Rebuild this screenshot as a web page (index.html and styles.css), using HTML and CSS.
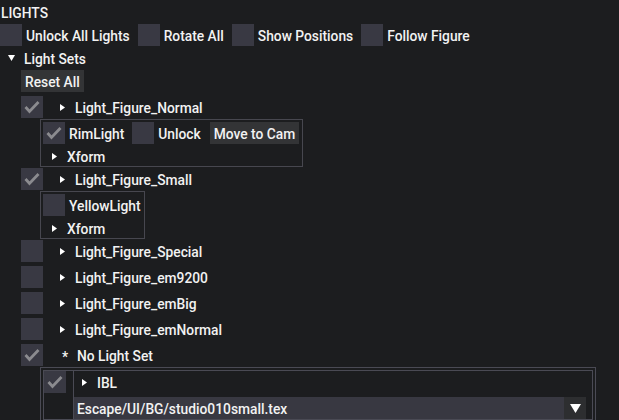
FILE: index.html
```html
<!DOCTYPE html>
<html>
<head>
<meta charset="utf-8">
<link rel="stylesheet" href="styles.css">
</head>
<body>
<div class="panel">
  <div class="title">LIGHTS</div>
  <div class="row">
    <span class="cb"></span><span class="lbl">Unlock All Lights</span>
    <span class="cb"></span><span class="lbl">Rotate All</span>
    <span class="cb"></span><span class="lbl">Show Positions</span>
    <span class="cb"></span><span class="lbl">Follow Figure</span>
  </div>
  <div class="node top"><span class="arr"><svg width="7" height="6" viewBox="0 0 7 6"><path d="M0 0H7L3.5 6Z" fill="#fff"/></svg></span>Light Sets</div>
  <div class="list">
    <div class="btn">Reset All</div>

    <div class="row">
      <span class="cb"><svg class="ck" width="22" height="22" viewBox="0 0 22 22"><path d="M4.5 11 8.5 15.5 17.5 6" fill="none" stroke="#8b8b8f" stroke-width="2.8"/></svg></span>
      <span class="node set"><span class="arr"><svg width="5" height="7" viewBox="0 0 5 7"><path d="M0 0V7L5 3.5Z" fill="#fff"/></svg></span>Light_Figure_Normal</span>
    </div>
    <div class="box">
      <div class="row">
        <span class="cb"><svg class="ck" width="22" height="22" viewBox="0 0 22 22"><path d="M4.5 11 8.5 15.5 17.5 6" fill="none" stroke="#8b8b8f" stroke-width="2.8"/></svg></span><span class="lbl">RimLight</span>
        <span class="cb"></span><span class="lbl">Unlock</span>
        <span class="btn">Move to Cam</span>
      </div>
      <div class="node xf"><span class="arr"><svg width="5" height="7" viewBox="0 0 5 7"><path d="M0 0V7L5 3.5Z" fill="#fff"/></svg></span>Xform</div>
    </div>

    <div class="row">
      <span class="cb"><svg class="ck" width="22" height="22" viewBox="0 0 22 22"><path d="M4.5 11 8.5 15.5 17.5 6" fill="none" stroke="#8b8b8f" stroke-width="2.8"/></svg></span>
      <span class="node set"><span class="arr"><svg width="5" height="7" viewBox="0 0 5 7"><path d="M0 0V7L5 3.5Z" fill="#fff"/></svg></span>Light_Figure_Small</span>
    </div>
    <div class="box">
      <div class="row">
        <span class="cb"></span><span class="lbl">YellowLight</span>
      </div>
      <div class="node xf"><span class="arr"><svg width="5" height="7" viewBox="0 0 5 7"><path d="M0 0V7L5 3.5Z" fill="#fff"/></svg></span>Xform</div>
    </div>

    <div class="row">
      <span class="cb"></span>
      <span class="node set"><span class="arr"><svg width="5" height="7" viewBox="0 0 5 7"><path d="M0 0V7L5 3.5Z" fill="#fff"/></svg></span>Light_Figure_Special</span>
    </div>
    <div class="row">
      <span class="cb"></span>
      <span class="node set"><span class="arr"><svg width="5" height="7" viewBox="0 0 5 7"><path d="M0 0V7L5 3.5Z" fill="#fff"/></svg></span>Light_Figure_em9200</span>
    </div>
    <div class="row">
      <span class="cb"></span>
      <span class="node set"><span class="arr"><svg width="5" height="7" viewBox="0 0 5 7"><path d="M0 0V7L5 3.5Z" fill="#fff"/></svg></span>Light_Figure_emBig</span>
    </div>
    <div class="row">
      <span class="cb"></span>
      <span class="node set"><span class="arr"><svg width="5" height="7" viewBox="0 0 5 7"><path d="M0 0V7L5 3.5Z" fill="#fff"/></svg></span>Light_Figure_emNormal</span>
    </div>
    <div class="row">
      <span class="cb"><svg class="ck" width="22" height="22" viewBox="0 0 22 22"><path d="M4.5 11 8.5 15.5 17.5 6" fill="none" stroke="#8b8b8f" stroke-width="2.8"/></svg></span>
      <span class="node set star"><span class="arr">*</span>No Light Set</span>
    </div>
    <div class="outer">
      <div class="tbl">
        <div class="c1"><span class="cb"><svg class="ck" width="22" height="22" viewBox="0 0 22 22"><path d="M4.5 11 8.5 15.5 17.5 6" fill="none" stroke="#8b8b8f" stroke-width="2.8"/></svg></span></div>
        <div class="c2">
          <div class="node ibl"><span class="arr"><svg width="5" height="7" viewBox="0 0 5 7"><path d="M0 0V7L5 3.5Z" fill="#fff"/></svg></span>IBL</div>
          <div class="combo"><span class="val">Escape/UI/BG/studio010small.tex</span><span class="drop"><svg width="11" height="9" viewBox="0 0 11 9"><path d="M0 0H11L5.5 9Z" fill="#fff"/></svg></span></div>
        </div>
      </div>
    </div>
  </div>
</div>
</body>
</html>
```

FILE: styles.css
```css
html, body {
  margin: 0;
  padding: 0;
  background: #1c1d1f;
}
body {
  font-family: "Roboto", "Liberation Sans", sans-serif;
  font-weight: 500;
  font-size: 13.8px;
  color: #f2f2f2;
  overflow: hidden;
  width: 619px;
  height: 420px;
}
.panel {
  display: flex;
  flex-direction: column;
  gap: 4px;
  padding-top: 4px;
}
.title {
  height: 16px;
  box-sizing: border-box;
  padding: 2px 0 0 1px;
  line-height: 14px;
}
.row {
  display: flex;
  align-items: center;
  height: 22px;
}
.cb {
  width: 22px;
  height: 22px;
  background: #393943;
  flex: none;
  display: block;
}
.ck { display: block; }
.lbl {
  margin-left: 4px;
  margin-right: 8px;
  height: 22px;
  box-sizing: border-box;
  padding-top: 2px;
  line-height: 20px;
  white-space: nowrap;
}
.node {
  display: flex;
  align-items: center;
  height: 16px;
  white-space: nowrap;
}
.node .txt { line-height: 16px; }
.arr {
  display: flex;
  align-items: center;
  width: 15px;
  flex: none;
  align-self: stretch;
}
.arr svg { display: block; }
.node {
  box-sizing: border-box;
  padding-top: 2px;
  line-height: 14px;
}
.node .arr { margin-top: -2px; }
.node.top { margin-left: 8px; }
.node.top .arr { width: 16px; }
.node.set { margin-left: 17px; height: 22px; }
.node.star .arr { width: 17px; padding-left: 2px; box-sizing: border-box; padding-top: 4px; }
.node.xf { margin-left: 9px; }
.list {
  display: flex;
  flex-direction: column;
  gap: 4px;
  padding-left: 21px;
  align-items: flex-start;
}
.btn {
  height: 22px;
  box-sizing: border-box;
  padding: 2px 4px 0;
  line-height: 20px;
  background: #333436;
  white-space: nowrap;
}
.box {
  border: 1px solid #47474f;
  margin: -3px 0 -3px 19px;
  padding: 2px 3px 2px 2px;
  display: flex;
  flex-direction: column;
  gap: 4px;
}
.box .row .lbl:last-child { margin-right: 0; }
.box .row .btn { margin-left: 1px; }
.outer {
  border: 1px solid #4a4a54;
  margin: -3px 0 0 19px;
  padding: 2px;
  width: 550px;
}
.tbl {
  border: 1px solid #4a4a54;
  display: flex;
}
.c1 {
  width: 29px;
  flex: none;
}
.c2 {
  border-left: 1px solid #4a4a54;
  flex: 1;
  display: flex;
  flex-direction: column;
  gap: 4px;
  padding-right: 6px;
}
.node.ibl { margin-left: 8px; height: 22px; }
.combo {
  display: flex;
  height: 22px;
  background: #383841;
}
.val {
  flex: 1;
  box-sizing: border-box;
  padding: 2px 0 0 3px;
  line-height: 20px;
}
.drop {
  width: 22px;
  background: #2d2e30;
  display: flex;
  align-items: center;
  justify-content: center;
}
.drop svg { display: block; }
```
